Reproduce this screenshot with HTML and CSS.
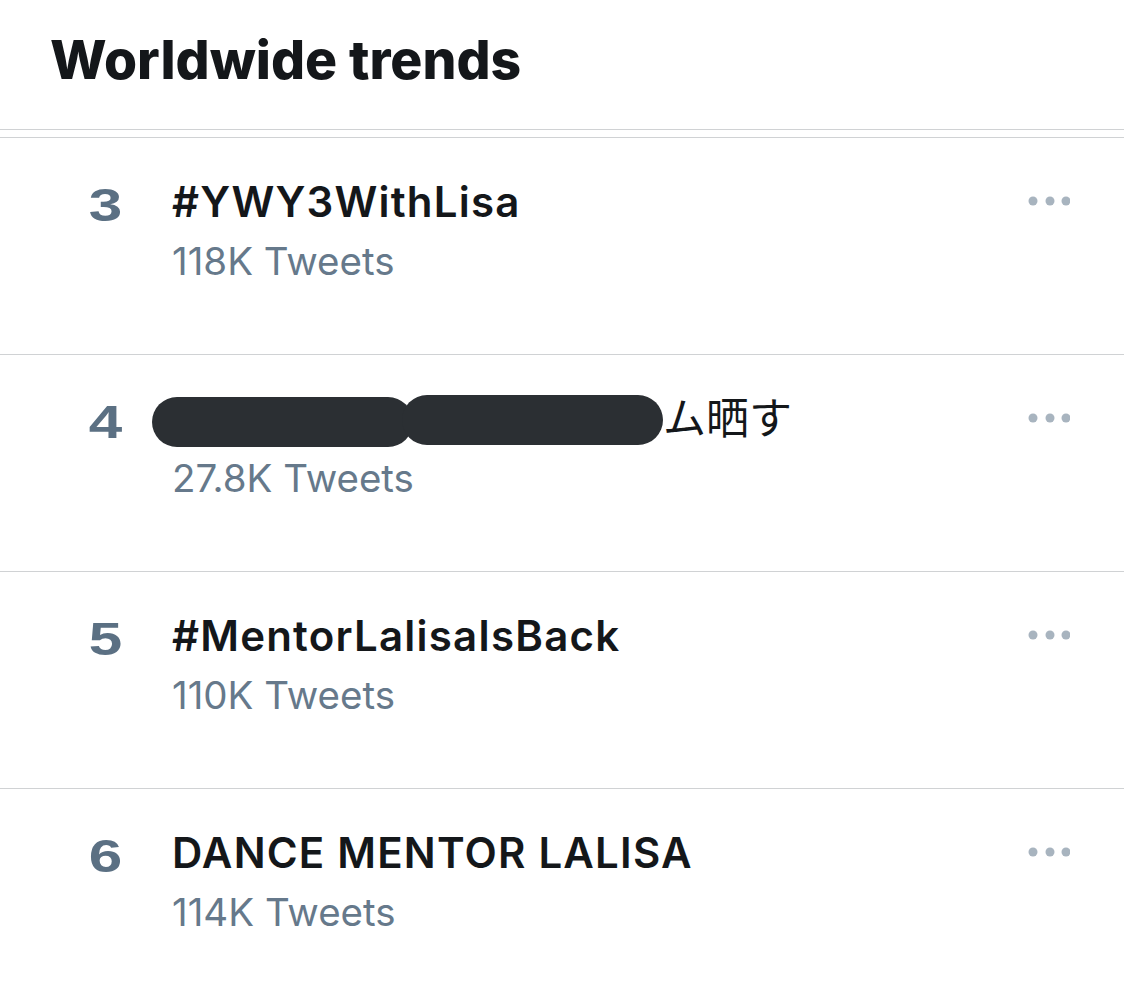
FILE: index.html
```html
<!DOCTYPE html>
<html lang="en">
<head>
<meta charset="utf-8">
<title>Worldwide trends</title>
<link rel="stylesheet" href="styles.css">
</head>
<body>
<main class="trends">
  <header class="trends-header">
    <h1 class="trends-title">Worldwide trends</h1>
  </header>
  <ol class="trend-list">
    <li class="trend">
      <span class="rank"><span class="rank-num">3</span></span>
      <div class="trend-body">
        <div class="trend-name">#YWY3WithLisa</div>
        <div class="trend-count">118K Tweets</div>
      </div>
      <button class="more" aria-label="More">
        <svg width="42" height="10" viewBox="0 0 42 10"><circle cx="5" cy="5" r="4.5"/><circle cx="22" cy="5" r="4.5"/><circle cx="38" cy="5" r="4.5"/></svg>
      </button>
    </li>
    <li class="trend">
      <span class="rank"><span class="rank-num">4</span></span>
      <div class="trend-body">
        <div class="trend-name"><span class="redact" aria-hidden="true"></span><span class="redact redact-second" aria-hidden="true"></span><span class="cjk" lang="ja">ム晒す</span></div>
        <div class="trend-count">27.8K Tweets</div>
      </div>
      <button class="more" aria-label="More">
        <svg width="42" height="10" viewBox="0 0 42 10"><circle cx="5" cy="5" r="4.5"/><circle cx="22" cy="5" r="4.5"/><circle cx="38" cy="5" r="4.5"/></svg>
      </button>
    </li>
    <li class="trend">
      <span class="rank"><span class="rank-num">5</span></span>
      <div class="trend-body">
        <div class="trend-name">#MentorLalisaIsBack</div>
        <div class="trend-count">110K Tweets</div>
      </div>
      <button class="more" aria-label="More">
        <svg width="42" height="10" viewBox="0 0 42 10"><circle cx="5" cy="5" r="4.5"/><circle cx="22" cy="5" r="4.5"/><circle cx="38" cy="5" r="4.5"/></svg>
      </button>
    </li>
    <li class="trend">
      <span class="rank"><span class="rank-num">6</span></span>
      <div class="trend-body">
        <div class="trend-name">DANCE MENTOR LALISA</div>
        <div class="trend-count">114K Tweets</div>
      </div>
      <button class="more" aria-label="More">
        <svg width="42" height="10" viewBox="0 0 42 10"><circle cx="5" cy="5" r="4.5"/><circle cx="22" cy="5" r="4.5"/><circle cx="38" cy="5" r="4.5"/></svg>
      </button>
    </li>
  </ol>
</main>
</body>
</html>
```

FILE: styles.css
```css
* { box-sizing: border-box; }

html, body {
  margin: 0;
  padding: 0;
  background: #ffffff;
}

body {
  font-family: Inter, "Noto Sans", "Liberation Sans", sans-serif;
  color: #14171a;
}

.trends {
  width: 1124px;
}

.trends-header {
  height: 130px;
  padding: 34px 0 0 50px;
  border-bottom: 1px solid #d0d2d4;
}

.trends-title {
  margin: 0;
  font-size: 53.5px;
  font-weight: 800;
  line-height: 52px;
  letter-spacing: 0;
}

.trend-list {
  list-style: none;
  margin: 7px 0 0;
  padding: 0;
  border-top: 1px solid #d0d2d4;
}

.trend {
  height: 217px;
  display: grid;
  grid-template-columns: 122px 1fr auto;
  column-gap: 50px;
  align-items: start;
  padding: 39px 54px 0 0;
  border-bottom: 1px solid #d0d2d4;
}

.rank {
  padding-top: 3px;
  text-align: right;
  font-size: 47px;
  font-weight: 700;
  line-height: 50px;
  color: #5b7083;
  font-family: "Liberation Sans", Arial, sans-serif;
}

.rank-num {
  display: inline-block;
  transform: scaleX(1.28);
  transform-origin: right center;
}

.trend-body {
  display: flex;
  flex-direction: column;
}

.trend-name {
  height: 50px;
  font-size: 42px;
  font-weight: 600;
  line-height: 50px;
  letter-spacing: 1.2px;
  white-space: nowrap;
  color: #14171a;
}

.trend-count {
  margin-top: 9px;
  font-size: 38.5px;
  font-weight: 400;
  line-height: 50px;
  color: #66798b;
}

.redact {
  display: inline-block;
  width: 261px;
  height: 50px;
  border-radius: 25px;
  background: #2b2f33;
  vertical-align: baseline;
  margin-bottom: -13px;
  margin-left: -20px;
}

.redact-second {
  margin-left: -11px;
  margin-bottom: -11px;
}

.cjk {
  font-family: "Noto Sans CJK JP", sans-serif;
  font-size: 43px;
  font-weight: 400;
  letter-spacing: 0;
  line-height: 1;
}

.more {
  margin: 19px 0 0;
  padding: 0;
  border: 0;
  background: none;
  line-height: 0;
  fill: #a8b4bf;
}
```
